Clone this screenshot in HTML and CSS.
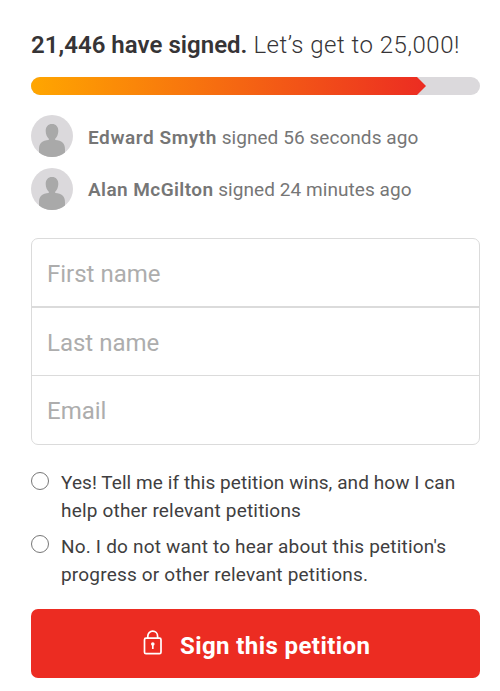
FILE: index.html
```html
<!DOCTYPE html>
<html lang="en">
<head>
<meta charset="utf-8">
<title>Sign this petition</title>
<link rel="stylesheet" href="styles.css">
</head>
<body>
<main class="petition">
  <h1 class="count"><strong>21,446 have signed.</strong> <span class="goal">Let’s get to 25,000!</span></h1>
  <div class="progress"><div class="progress-fill"></div></div>
  <ul class="signers">
    <li class="signer">
      <svg class="avatar" viewBox="0 0 42 42"><circle cx="21" cy="21" r="21" fill="#dbd9dc"/><path d="M21 9c4 0 6.300 2.700 6.300 7 0 3.300-1.300 6.100-3.100 7.800v1.300c6.500.500 9.800 3.300 9.800 9.100v3.300A21 21 0 0 1 8 37.500v-3.300c0-5.800 3.300-8.600 9.800-9.100v-1.300c-1.800-1.700-3.100-4.500-3.100-7.800 0-4.300 2.300-7 6.300-7z" fill="#a9a9a9"/></svg>
      <p class="signer-text signer-first"><strong class="name-a">Edward Smyth</strong> <span class="time">signed 56 seconds ago</span></p>
    </li>
    <li class="signer">
      <svg class="avatar" viewBox="0 0 42 42"><circle cx="21" cy="21" r="21" fill="#dbd9dc"/><path d="M21 9c4 0 6.300 2.700 6.300 7 0 3.300-1.300 6.100-3.100 7.800v1.300c6.500.500 9.800 3.300 9.800 9.100v3.300A21 21 0 0 1 8 37.500v-3.300c0-5.800 3.300-8.600 9.800-9.100v-1.300c-1.800-1.700-3.100-4.500-3.100-7.800 0-4.300 2.300-7 6.300-7z" fill="#a9a9a9"/></svg>
      <p class="signer-text"><strong class="name-b">Alan McGilton</strong> <span class="time">signed 24 minutes ago</span></p>
    </li>
  </ul>
  <form>
    <div class="fields">
      <input class="field" type="text" placeholder="First name" aria-label="First name">
      <input class="field field-last" type="text" placeholder="Last name" aria-label="Last name">
      <input class="field field-email" type="email" placeholder="Email" aria-label="Email">
    </div>
    <label class="option"><input class="radio" type="radio" name="updates"><span class="option-text"><span class="tight">Yes! Tell me if this petition wins, and how I can</span><br>help other relevant petitions</span></label>
    <label class="option option-no"><input class="radio" type="radio" name="updates"><span class="option-text">No. I do not want to hear about this petition's<br>progress or other relevant petitions.</span></label>
    <button class="submit" type="button">
      <svg class="lock" viewBox="0 0 20 26" fill="none" stroke="#fff" stroke-width="1.700"><rect x="1.500" y="8.200" width="16.500" height="15.500" rx="1.500"/><path d="M4.800 8V6.200C4.800 3.200 6.900 1.200 9.700 1.200s4.900 2 4.900 5V8"/><circle cx="9.800" cy="14" r="1.800" fill="#fff" stroke="none"/><path d="M9.800 14v5"/></svg>
      <span>Sign this petition</span>
    </button>
  </form>
</main>
</body>
</html>
```
FILE: styles.css
```css
* { box-sizing: border-box; }
body { margin: 0; background: #fff; color: #363436; font-family: Roboto, "Liberation Sans", sans-serif; }
.petition { width: 449px; margin-left: 31px; padding-top: 29px; }
.count { margin: 0; height: 32px; font-size: 24px; line-height: 32px; font-weight: 400; white-space: nowrap; }
.count strong { font-weight: 600; letter-spacing: .03px; }
.goal { font-weight: 300; letter-spacing: .5px; }
.progress { height: 18px; margin-top: 16px; border-radius: 9px; background: #dbd9dc; overflow: hidden; }
.progress-fill { width: 395px; height: 18px; background: linear-gradient(90deg, #ffa600, #ec2c22); clip-path: polygon(0 0, 386px 0, 100% 50%, 386px 100%, 0 100%); }
.signers { list-style: none; margin: 20px 0 0; padding: 0; display: grid; gap: 11px; }
.signer { display: flex; height: 42px; gap: 15px; color: #767676; font-size: 19px; }
.avatar { width: 42px; height: 42px; flex: none; }
.signer-text { margin: 0; line-height: 44px; white-space: nowrap; }
.signer-first { line-height: 46px; }
.signer-text strong { font-weight: 600; }
.name-a { letter-spacing: .57px; }
.name-b { letter-spacing: .42px; }
.time { letter-spacing: .06px; }
form { margin: 28px 0 0; }
.fields { height: 207px; display: grid; grid-template-rows: 67px 69px 69px; border: 1px solid #dbdbdb; border-radius: 7px; overflow: hidden; }
.field { width: 100%; border: 0; padding: 3px 15px 0; background: none; color: #363436; font: 400 24px Roboto, sans-serif; outline: 0; }
.field-last { border-top: 2px solid #dbdbdb; }
.field-email { border-top: 1px solid #dbdbdb; padding-top: 1px; }
.field::placeholder { color: #adadad; opacity: 1; }
.option { display: flex; gap: 12px; margin-top: 23px; height: 56px; font-size: 19px; line-height: 28px; letter-spacing: .19px; white-space: nowrap; color: #403e40; }
.option-text { padding-top: 1px; }
.tight { letter-spacing: .07px; }
.option-no { margin-top: 8px; }
.radio { appearance: none; flex: none; width: 18px; height: 18px; margin: 4px 0 0; border: 1.500px solid #777; border-radius: 50%; }
.option-no .radio { margin-top: 3px; }
.submit { display: flex; width: 449px; height: 69px; margin-top: 21px; padding: 0 0 0 112px; gap: 17px; align-items: center; border: 0; border-radius: 7px; background: #ec2c22; color: #fff; font: 700 24px Roboto, sans-serif; letter-spacing: .41px; }
.lock { width: 20px; height: 26px; margin-top: -2px; }
.submit span { padding-top: 4px; white-space: nowrap; }
```
